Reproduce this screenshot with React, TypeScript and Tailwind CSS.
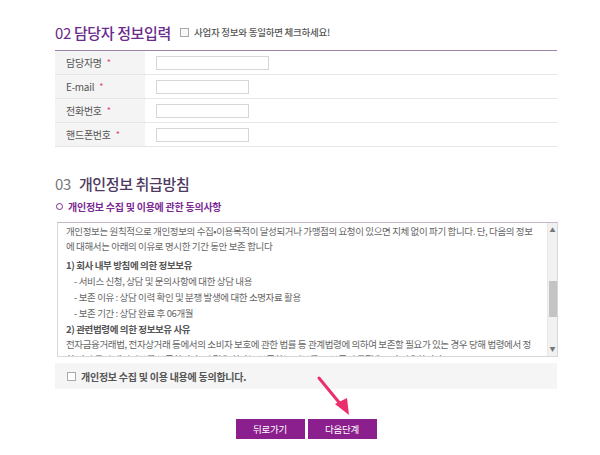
import React from "react";

const font = { fontFamily: '"Noto Sans CJK KR", "Noto Sans", sans-serif' };

function Row({ label, w }: { label: string; w: string }) {
  return (
    <div className="flex h-6 border-b border-[#e6e6e6]">
      <div className="w-[90px] bg-[#f4f4f4] flex items-center pl-[11px] text-[10px] text-[#555] tracking-tight">
        {label}
        <span className="text-[#d9467a] ml-[5px] text-[9px]">*</span>
      </div>
      <div className="flex items-center pl-[11px]">
        <div className={`${w} h-[14px] border border-[#d6d6d6] bg-white`} />
      </div>
    </div>
  );
}

export default function App() {
  return (
    <div className="relative w-[600px] h-[455px] bg-white overflow-hidden" style={font}>
      <div className="absolute left-[55px] top-0 w-[502px]">
        {/* Section 02 */}
        <div className="h-[50px] flex items-end pb-[10px]">
          <div className="flex items-center">
            <span className="text-[15px] text-[#6a2b8c] leading-none tracking-tight">
              02 <span className="font-medium">담당자 정보입력</span>
            </span>
            <span className="ml-[9px] w-[9px] h-[9px] border border-[#aaa] bg-[#f8f8f8]" />
            <span className="ml-[5px] text-[9.5px] text-[#555] font-medium tracking-tight">사업자 정보와 동일하면 체크하세요!</span>
          </div>
        </div>
        <div className="border-t-[1.5px] border-[#9d84aa]">
          <Row label="담당자명" w="w-[113px]" />
          <Row label="E-mail" w="w-[93px]" />
          <Row label="전화번호" w="w-[93px]" />
          <Row label="핸드폰번호" w="w-[93px]" />
        </div>

        {/* Section 03 */}
        <div className="mt-[27px] flex items-center h-[18px] text-[15px] leading-none tracking-tight">
          <span className="text-[#777]">03</span>
          <span className="ml-[8px] text-[#4e3a5e] font-medium">개인정보 취급방침</span>
        </div>
        <div className="mt-[5px] h-[18px] flex items-center text-[10px] text-[#7b2a93] font-bold tracking-tight">
          <span className="w-[7px] h-[7px] rounded-full border-[1.5px] border-[#7b2a93] mr-[5px] ml-[1px]" />
          개인정보 수집 및 이용에 관한 동의사항
        </div>

        <div className="mt-[7px] ml-[2px] w-[501px] h-[135px] border border-[#d8d8d8] border-t-[#c9b5c9] flex overflow-hidden">
          <div className="flex-1 pl-[8px] pr-[6px] pt-[1px] text-[9.5px] text-[#666] leading-[15px] tracking-[-0.04em] whitespace-nowrap">
            <p>개인정보는 원칙적으로 개인정보의 수집•이용목적이 달성되거나 가맹점의 요청이 있으면 지체 없이 파기 합니다. 단, 다음의 정보<br />에 대해서는 아래의 이유로 명시한 기간 동안 보존 합니다</p>
            <p className="mt-[4px] font-bold text-[#555]">1) 회사 내부 방침에 의한 정보보유</p>
            <p className="mt-[1px] pl-[8px]">- 서비스 신청, 상담 및 문의사항에 대한 상담 내용</p>
            <p className="mt-[1px] pl-[8px]">- 보존 이유 : 상담 이력 확인 및 분쟁 발생에 대한 소명자료 활용</p>
            <p className="mt-[1px] pl-[8px]">- 보존 기간 : 상담 완료 후 06개월</p>
            <p className="mt-[1px] font-bold text-[#555]">2) 관련법령에 의한 정보보유 사유</p>
            <p>전자금융거래법, 전자상거래 등에서의 소비자 보호에 관한 법률 등 관계법령에 의하여 보존할 필요가 있는 경우 당해 법령에서 정<br />한 기간 동안 개인정보를 보존합니다. 이 경우 회사는 보존하는 정보를 그 보존의 목적으로만 이용합니다.</p>
          </div>
          <div className="w-[10px] bg-[#f1f1f1] border-l border-[#e8e8e8] flex flex-col items-center justify-between py-[4px] text-[6px] text-[#777] leading-none">
            <span>▲</span>
            <div className="w-[8px] h-[36px] bg-[#c4c4c4] mt-[48px] mb-auto" />
            <span>▼</span>
          </div>
        </div>

        <div className="mt-[6px] h-[26px] bg-[#f5f5f5] flex items-center pl-[12px]">
          <span className="w-[9px] h-[9px] border border-[#aaa] bg-white" />
          <span className="ml-[5px] text-[10px] font-bold text-[#555] tracking-tight">개인정보 수집 및 이용 내용에 동의합니다.</span>
        </div>

        <div className="mt-[30px] flex justify-center gap-[3px]">
          <div className="w-[69px] h-[20px] bg-[#8b1f8e] text-white text-[9.5px] flex items-center justify-center tracking-tight">뒤로가기</div>
          <div className="w-[69px] h-[20px] bg-[#8b1f8e] text-white text-[9.5px] flex items-center justify-center tracking-tight">다음단계</div>
        </div>
      </div>

      {/* pointer arrow */}
      <svg className="absolute left-0 top-0" width="600" height="455" viewBox="0 0 600 455">
        <line x1="319" y1="378" x2="342" y2="406" stroke="#ea2f6c" strokeWidth="3" strokeLinecap="round" />
        <polygon points="335,404 349,415 347,398" fill="#ea2f6c" />
      </svg>
    </div>
  );
}
